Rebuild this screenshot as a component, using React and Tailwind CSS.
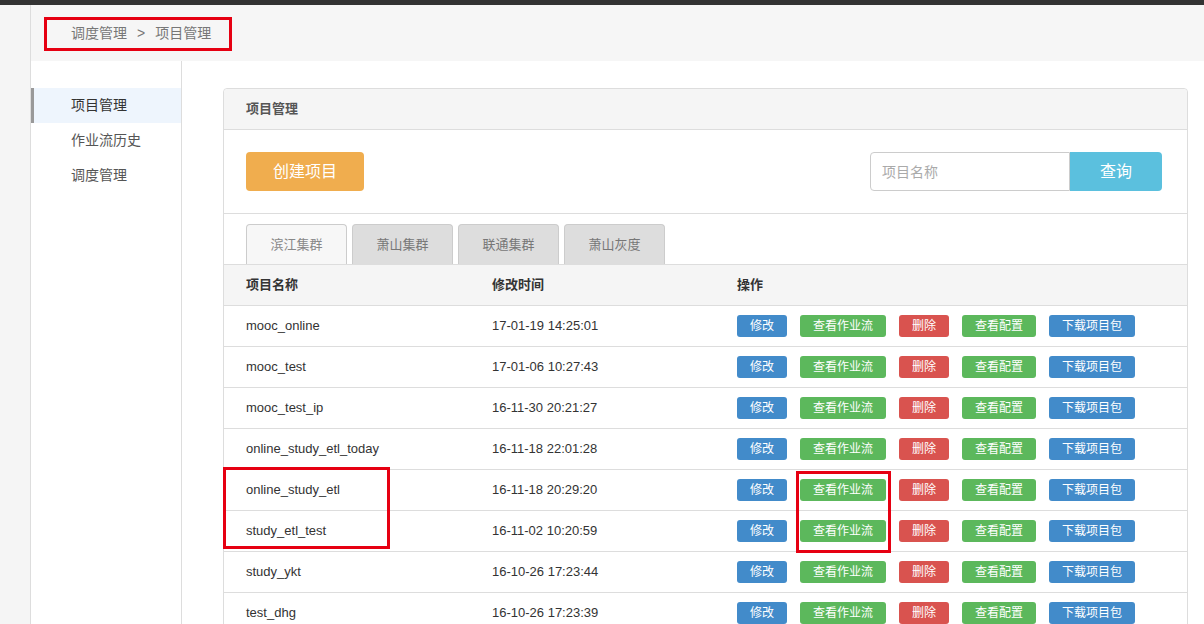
import React from 'react';

const FONT = '"Liberation Sans", "Noto Sans CJK SC", sans-serif';

const projects = [
  { name: 'mooc_online', time: '17-01-19 14:25:01' },
  { name: 'mooc_test', time: '17-01-06 10:27:43' },
  { name: 'mooc_test_ip', time: '16-11-30 20:21:27' },
  { name: 'online_study_etl_today', time: '16-11-18 22:01:28' },
  { name: 'online_study_etl', time: '16-11-18 20:29:20' },
  { name: 'study_etl_test', time: '16-11-02 10:20:59' },
  { name: 'study_ykt', time: '16-10-26 17:23:44' },
  { name: 'test_dhg', time: '16-10-26 17:23:39' },
];

const tabs = ['滨江集群', '萧山集群', '联通集群', '萧山灰度'];

function ActionButton({ color, children }) {
  return (
    <button className={`h-[22px] px-[13px] rounded-[3px] text-[12px] leading-[22px] text-white ${color}`}>
      {children}
    </button>
  );
}

function ProjectRow({ project }) {
  return (
    <div className="flex items-center h-[41px] px-[22px] border-b border-[#ddd] text-[13px] text-[#333]">
      <div className="w-[246px]">{project.name}</div>
      <div className="w-[245px]">{project.time}</div>
      <div className="flex items-center gap-[13px]">
        <ActionButton color="bg-[#428bca]">修改</ActionButton>
        <ActionButton color="bg-[#5cb85c]">查看作业流</ActionButton>
        <ActionButton color="bg-[#d9534f]">删除</ActionButton>
        <ActionButton color="bg-[#5cb85c]">查看配置</ActionButton>
        <ActionButton color="bg-[#428bca]">下载项目包</ActionButton>
      </div>
    </div>
  );
}

export default function App() {
  return (
    <div className="relative w-[1204px] h-[624px] overflow-hidden flex flex-col bg-white" style={{ fontFamily: FONT }}>
      {/* top bar */}
      <div className="h-[5px] bg-[#333] shrink-0" />

      <div className="flex flex-1 min-h-0">
        {/* left strip */}
        <div className="w-[31px] shrink-0 bg-[#f5f5f5] border-r border-[#ddd]" />

        <div className="flex-1 flex flex-col min-w-0">
          {/* breadcrumb */}
          <div className="h-[56px] shrink-0 bg-[#f6f6f6] flex items-center pl-[40px] text-[14px] text-[#777]">
            <span>调度管理</span>
            <span className="mx-[10px]">&gt;</span>
            <span>项目管理</span>
          </div>

          <div className="flex flex-1 min-h-0">
            {/* sidebar */}
            <aside className="w-[151px] shrink-0 border-r border-[#ddd] pt-[27px] text-[14px] text-[#333]">
              <div className="h-[35px] flex items-center pl-[37px] bg-[#eef5fd] border-l-[3px] border-[#999]">项目管理</div>
              <div className="h-[35px] flex items-center pl-[40px] text-[#555]">作业流历史</div>
              <div className="h-[35px] flex items-center pl-[40px] text-[#555]">调度管理</div>
            </aside>

            {/* main */}
            <main className="flex-1 pl-[41px] pr-[16px] pt-[27px]">
              <div className="border border-[#ddd] rounded-[4px]">
                <div className="h-[41px] bg-[#f5f5f5] border-b border-[#ddd] rounded-t-[4px] flex items-center px-[22px] text-[13px] font-bold text-[#555]">
                  项目管理
                </div>

                <div className="flex items-center justify-between px-[22px] pr-[25px] py-[22px] border-b border-[#ddd]">
                  <button className="w-[118px] h-[39px] rounded-[4px] bg-[#f0ad4e] text-white text-[16px]">创建项目</button>
                  <div className="flex">
                    <input
                      className="w-[200px] h-[39px] border border-[#ccc] rounded-l-[4px] px-[11px] text-[14px] text-[#555] placeholder:text-[#aaa] outline-none"
                      placeholder="项目名称"
                    />
                    <button className="w-[92px] h-[39px] rounded-r-[4px] bg-[#5bc0de] text-white text-[16px]">查询</button>
                  </div>
                </div>

                <div className="flex gap-[5px] px-[22px] pt-[10px]">
                  {tabs.map((tab, i) => (
                    <div
                      key={tab}
                      className={`w-[101px] h-[40px] flex items-center justify-center rounded-t-[4px] border border-b-0 text-[13px] ${
                        i === 0 ? 'bg-[#f7f7f7] border-[#ccc] text-[#888]' : 'bg-[#ddd] border-[#ccc] text-[#777]'
                      }`}
                    >
                      {tab}
                    </div>
                  ))}
                </div>

                <div className="flex items-center h-[42px] px-[22px] bg-[#f5f5f5] border-y border-[#ddd] text-[13px] font-bold text-[#333]">
                  <div className="w-[246px]">项目名称</div>
                  <div className="w-[245px]">修改时间</div>
                  <div>操作</div>
                </div>

                {projects.map((p) => (
                  <ProjectRow key={p.name} project={p} />
                ))}
              </div>
            </main>
          </div>
        </div>
      </div>

      {/* red annotation boxes */}
      <div className="absolute left-[44px] top-[17px] w-[188px] h-[34px] border-[3px] border-[#e60012]" />
      <div className="absolute left-[223px] top-[467px] w-[167px] h-[82px] border-[3px] border-[#e60012]" />
      <div className="absolute left-[796px] top-[471px] w-[95px] h-[82px] border-[3px] border-[#e60012]" />
    </div>
  );
}
